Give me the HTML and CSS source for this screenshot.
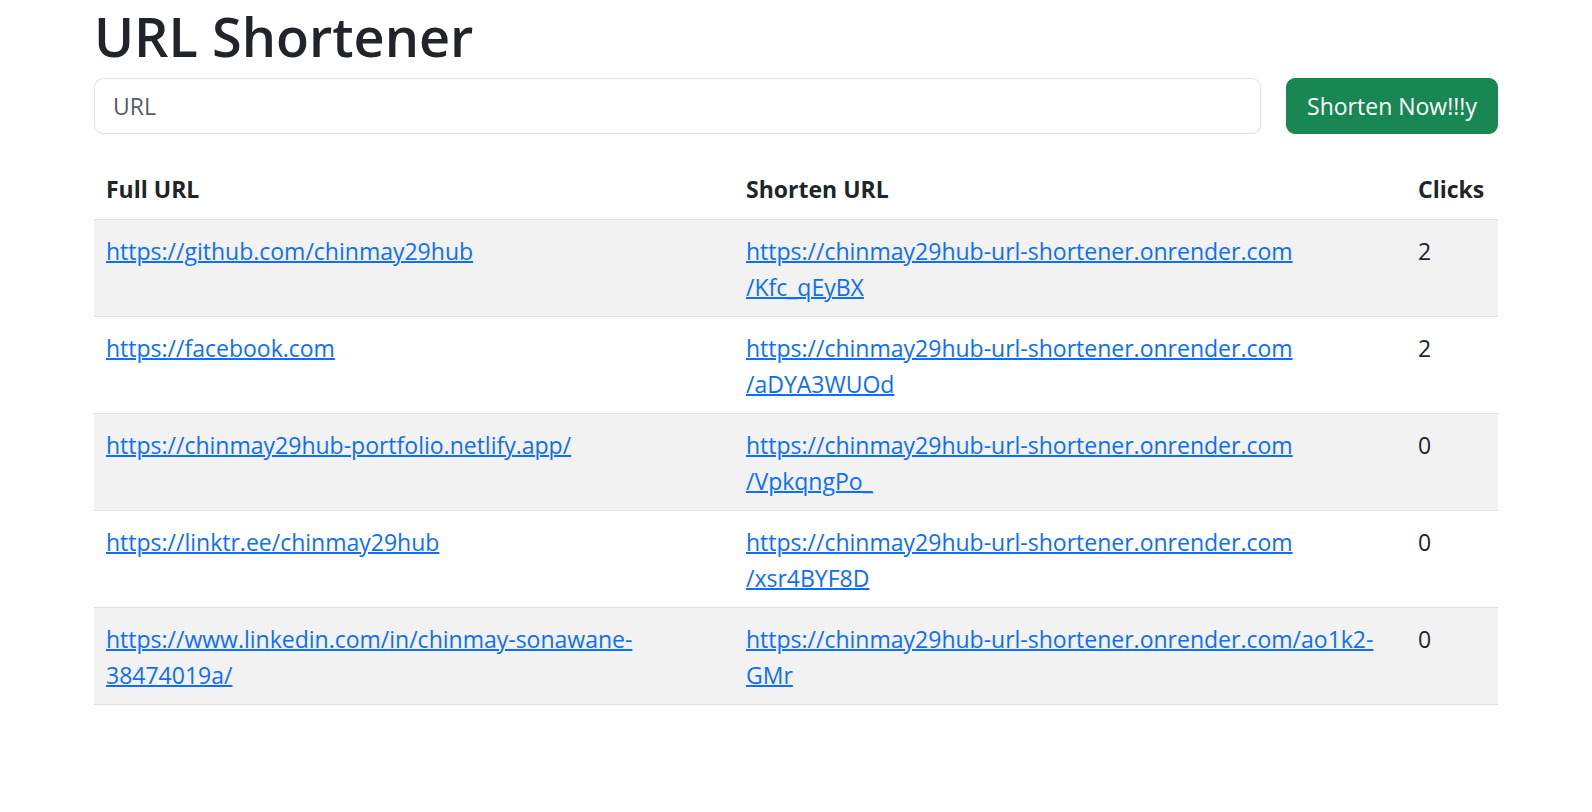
FILE: index.html
```html
<!DOCTYPE html>
<html lang="en">
<head>
<meta charset="utf-8">
<title>URL Shortener</title>
<link rel="stylesheet" href="styles.css">
</head>
<body>
<div class="container">
  <h1 class="title">URL Shortener</h1>
  <form class="shorten-form">
    <input class="url-input" type="url" placeholder="URL">
    <button class="btn-shorten" type="button">Shorten Now!!!y</button>
  </form>
  <table class="url-table">
    <colgroup>
      <col class="col-full">
      <col class="col-short">
      <col class="col-clicks">
    </colgroup>
    <thead>
      <tr><th>Full URL</th><th>Shorten URL</th><th>Clicks</th></tr>
    </thead>
    <tbody>
      <tr class="striped">
        <td><a href="#">https://github.com/chinmay29hub</a></td>
        <td><a href="#">https://chinmay29hub-url-shortener.onrender.com<wbr>/Kfc_qEyBX</a></td>
        <td>2</td>
      </tr>
      <tr>
        <td><a href="#">https://facebook.com</a></td>
        <td><a href="#">https://chinmay29hub-url-shortener.onrender.com<wbr>/aDYA3WUOd</a></td>
        <td>2</td>
      </tr>
      <tr class="striped">
        <td><a href="#">https://chinmay29hub-portfolio.netlify.app/</a></td>
        <td><a href="#">https://chinmay29hub-url-shortener.onrender.com<wbr>/VpkqngPo_</a></td>
        <td>0</td>
      </tr>
      <tr>
        <td><a href="#">https://linktr.ee/chinmay29hub</a></td>
        <td><a href="#">https://chinmay29hub-url-shortener.onrender.com<wbr>/xsr4BYF8D</a></td>
        <td>0</td>
      </tr>
      <tr class="striped">
        <td><a href="#">https://www.linkedin.com/in/chinmay-sonawane-38474019a/</a></td>
        <td><a href="#">https://chinmay29hub-url-shortener.onrender.com/ao1k2-GMr</a></td>
        <td>0</td>
      </tr>
    </tbody>
  </table>
</div>
</body>
</html>
```
FILE: styles.css
```css
* { box-sizing: border-box; }
html, body { margin: 0; padding: 0; background: #fff; }
body {
  font-family: "Open Sans", "Noto Sans", sans-serif;
  font-size: 23px;
  line-height: 36px;
  color: #212529;
}
.container {
  padding: 0 94px;
}
.title {
  margin: 0;
  font-size: 54px;
  line-height: 72px;
  font-weight: 600;
  color: #212529;
}
.shorten-form {
  display: flex;
  gap: 25px;
  margin-top: 6px;
}
.url-input {
  flex: 1;
  height: 56px;
  padding: 9px 18px;
  border: 1.5px solid #dee2e6;
  border-radius: 9px;
  font-family: inherit;
  font-size: 23px;
  color: #212529;
  outline: none;
}
.url-input::placeholder { color: #595c5f; opacity: 1; }
.btn-shorten {
  height: 56px;
  width: 212px;
  padding: 9px 18px;
  border: 1.5px solid #198754;
  background: #198754;
  color: #fff;
  border-radius: 9px;
  font-family: inherit;
  font-size: 23px;
  white-space: nowrap;
}
.url-table {
  width: 100%;
  margin-top: 25px;
  border-collapse: collapse;
  table-layout: fixed;
}
.col-full { width: 640px; }
.col-short { width: 672px; }
.col-clicks { width: 92px; }
.url-table th,
.url-table td {
  padding: 12px;
  text-align: left;
  vertical-align: top;
  border-bottom: 1px solid #dee2e6;
}
.url-table td { padding-top: 13px; padding-bottom: 11px; }
.url-table th { font-weight: 700; }
.url-table tr.striped td { background: #f2f2f2; }
.url-table a {
  color: #0d6efd;
  text-decoration: underline;
  text-decoration-thickness: 2px;
}
```
